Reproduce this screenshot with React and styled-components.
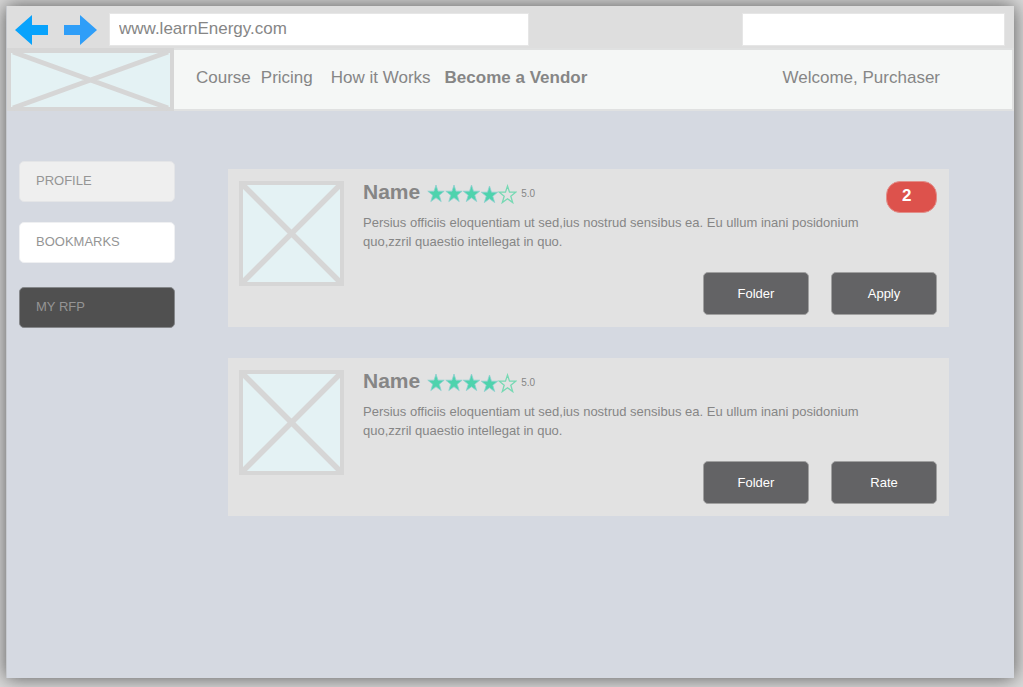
import React from 'react';
import styled, { createGlobalStyle } from 'styled-components';

const GlobalStyle = createGlobalStyle`
  * { box-sizing: border-box; }
  body {
    margin: 0;
    background: #d9d9d9;
    color: #868686;
    font-family: "Liberation Sans", Arial, sans-serif;
    font-size: 13px;
  }
  button, input { font: inherit; color: inherit; }
`;

const Desktop = styled.div`
  min-height: 100vh;
  padding: 6px 9px 9px 6px;
  display: flex;
`;

const BrowserWindow = styled.div`
  flex: 1;
  min-width: 0;
  display: flex;
  flex-direction: column;
  background: #d5d9e1;
  border-left: 1px solid #c6c9ce;
  box-shadow: 0 0 18px rgba(0, 0, 0, 0.6);
`;

const Toolbar = styled.div`
  display: flex;
  align-items: center;
  height: 42px;
  padding: 5px 9px 1px 8px;
  background: #dedede;
`;

const ArrowButton = styled.button`
  display: block;
  flex: none;
  width: 33px;
  height: 31px;
  padding: 0;
  margin-right: ${(p) => p.$gap}px;
  border: 0;
  background: none;
  svg { display: block; width: 100%; height: 100%; }
`;

const ChromeInput = styled.input`
  height: 33px;
  flex: 0 1 ${(p) => p.$width}px;
  min-width: 0;
  margin-left: ${(p) => (p.$end ? 'auto' : '0')};
  padding: 0 9px 1px;
  border: 1px solid #e6e6e6;
  border-radius: 0;
  background: #fff;
  font-size: 17px;
  outline: none;
`;

const Header = styled.header`
  display: flex;
  align-items: stretch;
  height: 63px;
  padding-right: 2px;
  background: #e0e1e1;
`;

const Logo = styled.a`
  width: 167px;
  flex: none;
  svg { display: block; width: 100%; height: 100%; }
`;

const HeaderBar = styled.div`
  flex: 1;
  display: flex;
  align-items: center;
  justify-content: space-between;
  margin: 2px 0;
  padding: 0 72px 4px 22px;
  background: #f5f7f6;
  font-size: 17px;
  line-height: 20px;
`;

const Nav = styled.nav`
  display: flex;
`;

const NavLink = styled.a`
  color: inherit;
  text-decoration: none;
  white-space: nowrap;
  margin-right: ${(p) => p.$gap}px;
  font-weight: ${(p) => (p.$strong ? 'bold' : 'normal')};
`;

const Page = styled.div`
  flex: 1;
  display: flex;
  align-items: flex-start;
  padding: 50px 65px 50px 12px;
`;

const Sidebar = styled.aside`
  flex: none;
  width: 156px;
  margin-right: 53px;
`;

const SideButton = styled.button`
  display: block;
  width: 100%;
  height: 41px;
  margin-bottom: ${(p) => p.$gap}px;
  padding: 0 16px 2px;
  border: 1px solid ${(p) => p.$edge};
  border-radius: 5px;
  background: ${(p) => p.$fill};
  color: #959595;
  text-align: left;
`;

const CardList = styled.main`
  flex: 1;
  min-width: 0;
  display: grid;
  gap: 31px;
  padding-top: 8px;
`;

const Card = styled.article`
  display: flex;
  min-height: 158px;
  padding: 12px 12px 12px 11px;
  background: #e2e2e2;
`;

const Thumb = styled.svg`
  flex: none;
  width: 105px;
  height: 105px;
  margin-right: 19px;
`;

const CardBody = styled.div`
  flex: 1;
  min-width: 0;
  display: flex;
  flex-direction: column;
`;

const CardTop = styled.div`
  display: flex;
  justify-content: space-between;
  align-items: flex-start;
`;

const TitleRow = styled.div`
  display: flex;
  align-items: center;
  height: 22px;
`;

const Name = styled.h2`
  margin: 0 7px 0 0;
  font-size: 21px;
  line-height: 22px;
`;

const Stars = styled.svg`
  width: 90px;
  height: 20px;
  margin-top: 3px;
`;

const Score = styled.span`
  margin: 4px 0 0 4px;
  font-size: 10px;
  line-height: 12px;
`;

const Description = styled.p`
  max-width: 510px;
  margin: 10px 0 0;
  line-height: 19px;
`;

const Badge = styled.span`
  flex: none;
  width: 51px;
  height: 32px;
  padding: 4px 15px;
  border: 1px solid #e28e89;
  border-radius: 14px;
  background: #dd524c;
  color: #fff;
  font-size: 17px;
  font-weight: bold;
  line-height: 20px;
`;

const Actions = styled.div`
  display: flex;
  justify-content: flex-end;
  gap: 22px;
  margin-top: auto;
`;

const ActionButton = styled.button`
  width: 106px;
  height: 43px;
  padding: 0;
  border: 1px solid #a0a0a0;
  border-radius: 5px;
  background: #636365;
  color: #fff;
`;

const STAR = 'M9 1 L11 7.2 L17.2 7.2 L12.3 11.2 L14.2 17.6 L9 13.8 L3.8 17.6 L5.7 11.2 L0.8 7.2 L7 7.2 Z';

function Rating({ full }) {
  return (
    <Stars viewBox="0 0 90 20" role="img" aria-label={`${full} of 5 stars`}>
      {[0, 1, 2, 3, 4].map((i) => (
        <path
          key={i}
          d={STAR}
          transform={`translate(${i * 18 - (i > 1 ? 0.5 : 0)} ${i > 2 ? 1 : 0})`}
          fill={i < full ? '#4ed3ad' : 'none'}
          stroke={i < full ? '#8fcfd0' : '#78d9b4'}
          strokeWidth={i < full ? 0.8 : 1.3}
        />
      ))}
    </Stars>
  );
}

function VendorCard({ card }) {
  return (
    <Card>
      <Thumb viewBox="0 0 105 105" aria-hidden="true">
        <rect x="2" y="2" width="101" height="101" fill="#e4f2f4" />
        <path d="M4 4 L101 101 M101 4 L4 101" stroke="#d6d6d6" strokeWidth="5.5" />
        <rect x="2" y="2" width="101" height="101" fill="none" stroke="#d6d6d6" strokeWidth="4" />
      </Thumb>
      <CardBody>
        <CardTop>
          <div>
            <TitleRow>
              <Name>Name</Name>
              <Rating full={4} />
              <Score>5.0</Score>
            </TitleRow>
            <Description>
              Persius officiis eloquentiam ut sed,ius nostrud sensibus ea. Eu ullum inani posidonium quo,zzril quaestio intellegat in quo.
            </Description>
          </div>
          {card.count && <Badge>{card.count}</Badge>}
        </CardTop>
        <Actions>
          {card.actions.map((label) => (
            <ActionButton key={label} type="button">{label}</ActionButton>
          ))}
        </Actions>
      </CardBody>
    </Card>
  );
}

const links = [
  { label: 'Course', gap: 10 },
  { label: 'Pricing', gap: 18 },
  { label: 'How it Works', gap: 14 },
  { label: 'Become a Vendor', gap: 0, strong: true },
];

const sections = [
  { label: 'PROFILE', fill: '#efefef', edge: '#e4e5e7', gap: 20 },
  { label: 'BOOKMARKS', fill: '#ffffff', edge: '#eff0f2', gap: 24 },
  { label: 'MY RFP', fill: '#505050', edge: '#85878a', gap: 0 },
];

const cards = [
  { id: 1, count: '2', actions: ['Folder', 'Apply'] },
  { id: 2, actions: ['Folder', 'Rate'] },
];

export default function App() {
  return (
    <>
      <GlobalStyle />
      <Desktop>
        <BrowserWindow>
          <Toolbar>
            <ArrowButton type="button" aria-label="Back" $gap={16}>
              <svg viewBox="0 0 33 31">
                <path d="M0 16 L17 1 V11 H33 V21 H17 V31 Z" fill="#08a3fc" />
              </svg>
            </ArrowButton>
            <ArrowButton type="button" aria-label="Forward" $gap={12}>
              <svg viewBox="0 0 33 31">
                <path d="M33 16 L16 1 V11 H0 V21 H16 V31 Z" fill="#2f9ef8" />
              </svg>
            </ArrowButton>
            <ChromeInput aria-label="Address" defaultValue="www.learnEnergy.com" $width={420} />
            <ChromeInput aria-label="Search" $width={263} $end />
          </Toolbar>
          <Header>
            <Logo href="#" aria-label="Home">
              <svg viewBox="0 0 167 63">
                <rect width="167" height="63" fill="#d6d6d6" />
                <rect x="4" y="5" width="159" height="54" fill="#e4f2f4" />
                <path d="M6 4 L161 60 M161 4 L6 60" stroke="#d6d6d6" strokeWidth="5" />
              </svg>
            </Logo>
            <HeaderBar>
              <Nav>
                {links.map((l) => (
                  <NavLink key={l.label} href="#" $gap={l.gap} $strong={l.strong}>{l.label}</NavLink>
                ))}
              </Nav>
              <span>Welcome, Purchaser</span>
            </HeaderBar>
          </Header>
          <Page>
            <Sidebar>
              {sections.map((s) => (
                <SideButton key={s.label} type="button" $fill={s.fill} $edge={s.edge} $gap={s.gap}>
                  {s.label}
                </SideButton>
              ))}
            </Sidebar>
            <CardList>
              {cards.map((c) => <VendorCard key={c.id} card={c} />)}
            </CardList>
          </Page>
        </BrowserWindow>
      </Desktop>
    </>
  );
}
